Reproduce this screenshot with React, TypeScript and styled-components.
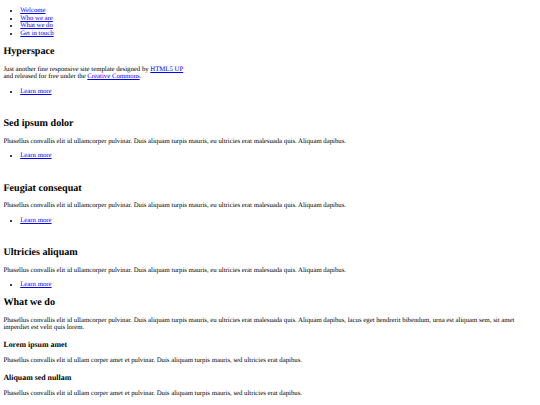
import React from 'react';
import styled, { createGlobalStyle } from 'styled-components';

// The reference is an unstyled page shot at 1280px wide and shrunk to 540px,
// so every browser default is scaled by this factor.
const S = 540 / 1280;
const px = (n: number) => `${n * S}px`;

const GlobalStyle = createGlobalStyle`
  html {
    overflow: hidden;
    background: #fff;
  }
  body {
    margin: 0 ${px(8)} ${px(8)};
    font-family: "Liberation Serif", "Times New Roman", serif;
    font-size: ${px(16)};
    line-height: ${px(18)};
    color: #000;
    text-rendering: geometricPrecision;
  }
`;

const Page = styled.div`
  display: block;
  padding-top: 0.5px;
`;

const List = styled.ul`
  margin: ${px(16)} 0;
  padding-left: ${px(40)};
  list-style: disc;
`;

const Item = styled.li`
  display: list-item;
`;

const Link = styled.a`
  color: #0000ee;
  text-decoration: underline;
`;

const Section = styled.section`
  display: block;
`;

// Empty image anchor in the original markup still takes one line box
const ImageSlot = styled.a`
  display: block;
  height: ${px(18)};
`;

const Heading = styled.h2`
  font-size: ${px(24)};
  line-height: ${px(27)};
  font-weight: bold;
  margin: ${px(19.92)} 0;
`;

const SubHeading = styled.h3`
  font-size: ${px(18.72)};
  line-height: ${px(22)};
  font-weight: bold;
  margin: ${px(18.72)} 0;
`;

const Text = styled.p`
  margin: ${px(16)} 0;
`;

const Features = styled.div`
  display: block;
`;

const navItems = ['Welcome', 'Who we are', 'What we do', 'Get in touch'];

const lorem =
  'Phasellus convallis elit id ullamcorper pulvinar. Duis aliquam turpis mauris, eu ultricies erat malesuada quis. Aliquam dapibus.';

const spotlights = ['Sed ipsum dolor', 'Feugiat consequat', 'Ultricies aliquam'];

const features = ['Lorem ipsum amet', 'Aliquam sed nullam'];

function LearnMore() {
  return (
    <List>
      <Item>
        <Link href="#">Learn more</Link>
      </Item>
    </List>
  );
}

export default function App() {
  return (
    <Page>
      <GlobalStyle />
      <nav>
        <List>
          {navItems.map(label => (
            <Item key={label}>
              <Link href="#">{label}</Link>
            </Item>
          ))}
        </List>
      </nav>

      <Section>
        <Heading>Hyperspace</Heading>
        <Text>
          Just another fine responsive site template designed by <Link href="#">HTML5 UP</Link>
          <br />
          and released for free under the <Link href="#">Creative Commons</Link>.
        </Text>
        <LearnMore />
      </Section>

      {spotlights.map(title => (
        <Section key={title}>
          <ImageSlot href="#" aria-hidden="true" />
          <Heading>{title}</Heading>
          <Text>{lorem}</Text>
          <LearnMore />
        </Section>
      ))}

      <Section>
        <Heading>What we do</Heading>
        <Text>
          Phasellus convallis elit id ullamcorper pulvinar. Duis aliquam turpis mauris, eu ultricies erat malesuada
          quis. Aliquam dapibus, lacus eget hendrerit bibendum, urna est aliquam sem, sit amet imperdiet est velit
          quis lorem.
        </Text>
        <Features>
          {features.map(title => (
            <Section key={title}>
              <SubHeading>{title}</SubHeading>
              <Text>
                Phasellus convallis elit id ullam corper amet et pulvinar. Duis aliquam turpis mauris, sed ultricies
                erat dapibus.
              </Text>
            </Section>
          ))}
        </Features>
      </Section>
    </Page>
  );
}
